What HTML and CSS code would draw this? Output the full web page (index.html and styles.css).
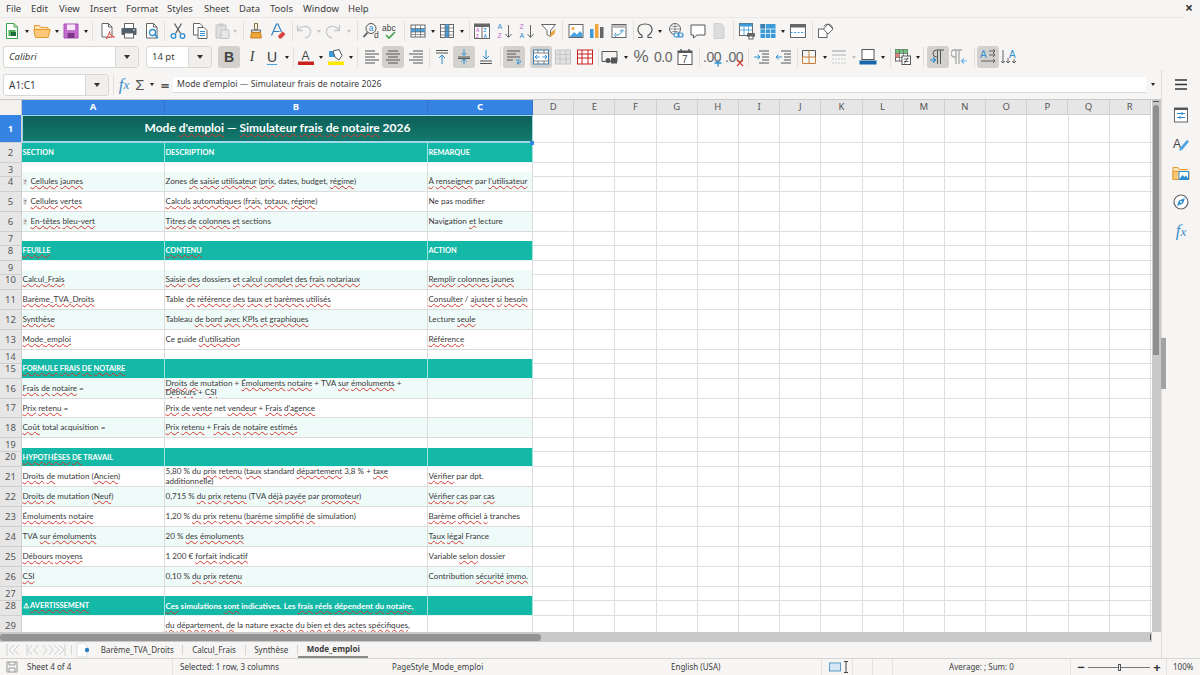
FILE: index.html
```html
<!DOCTYPE html>
<html lang="en">
<head>
    <meta charset="UTF-8">
    <title>Mode_emploi - LibreOffice Calc</title>
    <link rel="stylesheet" href="styles.css">
</head>
<body>
<div class="app">

    <div class="menubar">
        <span>File</span><span>Edit</span><span>View</span><span>Insert</span><span>Format</span><span>Styles</span><span>Sheet</span><span>Data</span><span>Tools</span><span>Window</span><span>Help</span>
        <span class="close">&#215;</span>
    </div>

    <!-- standard toolbar -->
    <div class="tb tb1">
        <span class="btn"><svg class="ic" viewBox="0 0 18 18"><path d="M3.5 1.500h7.500l3.500 3.500v11.500h-11z" fill="#fff" stroke="#3fa34d"/><path d="M11 1.500V5h3.500" stroke="#3fa34d"/><rect x="5.500" y="8" width="7" height="6" fill="#4fae5c"/><path d="M8 10h5v4H8z" fill="#1f6e3a"/></svg></span>
        <span class="ar"></span>
        <span class="btn"><svg class="ic" viewBox="0 0 18 18"><path d="M1.500 7V3.500h5l1.500 2h7V7" fill="#fde3b0" stroke="#e59a34"/><path d="M.8 7.500h16.400l-2 8H2.300z" fill="#fcc877" stroke="#e59a34"/></svg></span>
        <span class="ar"></span>
        <span class="btn n-1"><svg class="ic" viewBox="0 0 18 18"><path d="M2 2h14v14H2z" fill="#c46fcf" stroke="#a84fb5"/><rect x="5" y="2.500" width="8" height="5.500" fill="#f6e9f8"/><rect x="5.500" y="11" width="7" height="5" fill="#7a3488"/></svg></span>
        <span class="ar"></span>
        <span class="sep"></span>
        <span class="btn n1"><svg class="ic" viewBox="0 0 18 18"><path d="M4 1.500h6.500l3.500 3.500v10H4z" fill="#fff" stroke="#666"/><path d="M10.500 1.500V5H14" stroke="#666"/><path d="M8 16.500c2-1 3-5 3.500-7 .5 3 2 5 5 5.500-2-.5-6 0-8.500 1.500z" fill="#fbe3e3" stroke="#d9453d"/></svg></span>
        <span class="btn"><svg class="ic" viewBox="0 0 18 18"><rect x="4.500" y="1.500" width="9" height="5" fill="#fff" stroke="#666"/><rect x="1.500" y="6" width="15" height="7" rx="1" fill="#4f5f6b"/><rect x="4.500" y="11" width="9" height="5" fill="#fff" stroke="#666"/><circle cx="14" cy="8" r=".8" fill="#fff"/></svg></span>
        <span class="btn n1"><svg class="ic" viewBox="0 0 18 18"><path d="M3.500 1.500h7l3.500 3.500v11H3.500z" fill="#fff" stroke="#666"/><path d="M10.500 1.500V5H14" stroke="#666"/><circle cx="9.500" cy="10.500" r="3" stroke="#2f8fd0" stroke-width="1.300"/><path d="M11.800 12.800l3.200 3.200" stroke="#2f8fd0" stroke-width="1.600"/></svg></span>
        <span class="sep n-1"></span>
        <span class="btn"><svg class="ic" viewBox="0 0 18 18"><path d="M5.500 1.500l6 10M12.500 1.500l-6 10" stroke="#555" stroke-width="1.200"/><circle cx="4.500" cy="14" r="2.300" stroke="#2f8fd0" stroke-width="1.300"/><circle cx="13.500" cy="14" r="2.300" stroke="#2f8fd0" stroke-width="1.300"/></svg></span>
        <span class="btn"><svg class="ic" viewBox="0 0 18 18"><path d="M2.500 1.500h6.500l2.500 2.500v9h-9z" fill="#fff" stroke="#666"/><path d="M7 5.500h6l3 3v8H7z" fill="#fff" stroke="#666"/><path d="M9 9.500h5M9 11.500h5M9 13.500h5" stroke="#2f8fd0"/></svg></span>
        <span class="btn"><svg class="ic" viewBox="0 0 18 18"><path d="M3 3h10v13H3z" fill="#dedede" stroke="#c4c4c4"/><rect x="5.500" y="1.500" width="5" height="3" fill="#ccc"/><path d="M8 8h8v8.500H8z" fill="#e8e8e8" stroke="#c4c4c4"/></svg></span>
        <span class="ar off n-2"></span>
        <span class="sep n2"></span>
        <span class="btn n-1"><svg class="ic" viewBox="0 0 18 18"><path d="M7.500 1.500h3v6h-3z" stroke="#8a6d3b"/><path d="M4.500 8h9v2.500h-9z" fill="#ddd" stroke="#666"/><path d="M4.500 10.500h9l.8 5.500H3.700z" fill="#f0a63c" stroke="#c97e1e"/></svg></span>
        <span class="btn"><svg class="ic" viewBox="0 0 18 18"><path d="M2.500 13.500L7.500 2h1.500l3.500 8M4.500 9.500h6" stroke="#2f7fc0" stroke-width="1.200"/><path d="M9 14l4.500-4.500 3 2.500-4 4.500H10z" fill="#d9453d"/></svg></span>
        <span class="sep n1"></span>
        <span class="btn n-2"><svg class="ic" viewBox="0 0 18 18"><path d="M2.500 3v5.500H8" stroke="#c8c8c8" stroke-width="1.300"/><path d="M3 8.500c2-5 11-6 12.500 0 1 4.500-2.500 7-5.500 7.500" stroke="#c8c8c8" stroke-width="1.300"/></svg></span>
        <span class="ar off"></span>
        <span class="btn n-1"><svg class="ic" viewBox="0 0 18 18"><path d="M15.500 3v5.500H10" stroke="#c8c8c8" stroke-width="1.300"/><path d="M15 8.500c-2-5-11-6-12.500 0-1 4.500 2.500 7 5.500 7.500" stroke="#c8c8c8" stroke-width="1.300"/></svg></span>
        <span class="ar off n1"></span>
        <span class="sep n2"></span>
        <span class="btn"><svg class="ic" viewBox="0 0 18 18"><circle cx="9" cy="6.500" r="5" stroke="#555"/><path d="M5.500 10.500L1.500 15" stroke="#555" stroke-width="1.800"/><text x="6.700" y="9" class="glyph blue">a</text><text x="12" y="16" class="glyph">d</text></svg></span>
        <span class="btn n-3"><svg class="ic" viewBox="0 0 18 18"><text x="1" y="8.500" class="glyph">abc</text><path d="M5 13l3 3 6-6" stroke="#3fa34d" stroke-width="1.600"/></svg></span>
        <span class="sep n1"></span>
        <span class="btn"><svg class="ic" viewBox="0 0 18 18"><rect x="2" y="3" width="14" height="12" fill="#fff" stroke="#666"/><rect x="2" y="6.500" width="14" height="3.500" fill="#4aa3df"/><path d="M2 6.500h14M2 10h14M2 12.500h14M6.500 3v12M11.500 3v12" stroke="#666" stroke-width=".7"/></svg></span>
        <span class="ar"></span>
        <span class="btn n-1"><svg class="ic" viewBox="0 0 18 18"><rect x="2.500" y="2.500" width="13" height="13" fill="#fff" stroke="#666"/><rect x="7" y="2.500" width="4" height="13" fill="#4aa3df"/><path d="M7 2.500v13M11 2.500v13M2.500 6h13M2.500 9.500h13M2.500 13h13" stroke="#666" stroke-width=".7"/></svg></span>
        <span class="ar"></span>
        <span class="sep n1"></span>
        <span class="btn n-1"><svg class="ic" viewBox="0 0 18 18"><rect x="1.500" y="2" width="15" height="14.500" fill="#fff" stroke="#666"/><rect x="1.500" y="2" width="15" height="3" fill="#666"/><path d="M9 5v11.500" stroke="#666"/><text x="3" y="10" class="glyph-s pink">A</text><text x="3" y="15.500" class="glyph-s pink">Z</text><text x="10.500" y="10" class="glyph-s blue">Z</text><text x="10.500" y="15.500" class="glyph-s blue">A</text></svg></span>
        <span class="btn n1"><svg class="ic" viewBox="0 0 18 18"><text x="1.500" y="7" class="glyph-t blue">A</text><text x="1.500" y="15.500" class="glyph-t pink">Z</text><path d="M12.500 3v12M9.500 12l3 3.500 3-3.500" stroke="#666"/></svg></span>
        <span class="btn"><svg class="ic" viewBox="0 0 18 18"><text x="1.500" y="7" class="glyph-t pink">Z</text><text x="1.500" y="15.500" class="glyph-t blue">A</text><path d="M12.500 3v12M9.500 12l3 3.500 3-3.500" stroke="#666"/></svg></span>
        <span class="btn"><svg class="ic" viewBox="0 0 18 18"><path d="M1.500 2.500h14l-5 6v6l-3.500-2v-4z" fill="#fff" stroke="#666"/><path d="M9.500 15.500l2-5.500 4-3-1 5z" fill="#f0a63c"/></svg></span>
        <span class="sep"></span>
        <span class="btn"><svg class="ic" viewBox="0 0 18 18"><rect x="2" y="2.500" width="14" height="13" fill="#fff" stroke="#666"/><circle cx="6" cy="6.500" r="1.500" fill="#f0a63c"/><path d="M2.500 15l4.500-5 3 2.500 3-3.500 2.500 3v3z" fill="#4aa3df"/></svg></span>
        <span class="btn n-1"><svg class="ic" viewBox="0 0 18 18"><rect x="2" y="7" width="3.500" height="9" fill="#3d9bd9"/><rect x="7" y="2" width="3.500" height="14" fill="#f0a63c"/><rect x="12" y="5" width="3.500" height="11" fill="#666"/></svg></span>
        <span class="btn"><svg class="ic" viewBox="0 0 18 18"><rect x="2" y="2.500" width="14" height="13" fill="#fff" stroke="#666"/><rect x="2.500" y="3" width="13" height="3" fill="#bbb"/><path d="M6 13c4 0 6-2 6-5M10 9.500L12 7.500l2 2M6 11l-1.500 2L6 15" stroke="#2f8fd0"/></svg></span>
        <span class="sep n1"></span>
        <span class="btn n-2"><svg class="ic" viewBox="0 0 18 18"><path d="M2 15.500h4v-2C3.500 12 2 10 2 7.500 2 4 5 2 9 2s7 2 7 5.500c0 2.500-1.500 4.500-4 6v2h4" stroke="#555" stroke-width="1.200"/></svg></span>
        <span class="ar"></span>
        <span class="btn n1"><svg class="ic" viewBox="0 0 18 18"><circle cx="8" cy="7" r="5.500" fill="#fff" stroke="#666"/><path d="M2.500 7h11M8 1.500v11M4 3.500c2 1.500 6 1.500 8 0M4 10.500c2-1.500 6-1.500 8 0" stroke="#666" stroke-width=".7"/><rect x="7" y="11" width="5" height="4" rx="2" fill="#fff" stroke="#2f8fd0" stroke-width="1.200"/><rect x="11" y="11" width="5" height="4" rx="2" stroke="#2f8fd0" stroke-width="1.200"/></svg></span>
        <span class="btn"><svg class="ic" viewBox="0 0 18 18"><path d="M2 3h14v10H8l-3.500 3v-3H2z" fill="#fff" stroke="#555"/></svg></span>
        <span class="btn n-1"><svg class="ic" viewBox="0 0 18 18"><path d="M4 1.500h7l3 3v12H4z" fill="#dcdcdc" stroke="#d0d0d0"/></svg></span>
        <span class="sep n1"></span>
        <span class="btn"><svg class="ic" viewBox="0 0 18 18"><rect x="1.500" y="1.500" width="13" height="12" fill="#fff" stroke="#666"/><rect x="1.500" y="1.500" width="13" height="3" fill="#3d9bd9"/><path d="M1.500 8h13M6 4.500v9M10.500 4.500v9" stroke="#3d9bd9" stroke-width=".8"/><rect x="9" y="11" width="8" height="4" rx="1" fill="#666"/><rect x="11" y="14" width="4" height="3" fill="#fff" stroke="#666"/></svg></span>
        <span class="btn n-1"><svg class="ic" viewBox="0 0 18 18"><rect x="1.500" y="2" width="15" height="14" fill="#3d9bd9"/><rect x="1.500" y="2" width="5" height="5" fill="#3d7eb0"/><path d="M6.500 2v14M1.500 7h15M11.500 7v9M1.500 11.500h15" stroke="#fff" stroke-width=".7"/></svg></span>
        <span class="ar"></span>
        <span class="btn"><svg class="ic" viewBox="0 0 18 18"><rect x="1.500" y="2.500" width="15" height="13" fill="#fff" stroke="#666"/><rect x="1.500" y="2.500" width="15" height="3" fill="#666"/><path d="M1.500 10.500h15" stroke="#3d9bd9" stroke-dasharray="2 1.500"/></svg></span>
        <span class="sep n1"></span>
        <span class="btn"><svg class="ic" viewBox="0 0 18 18"><rect x="1.500" y="7" width="8.500" height="8.500" fill="#fff" stroke="#666"/><path d="M11 2l5 5-5 5-4.500-5z" fill="#fff" stroke="#666"/><path d="M6.800 4.300a4.800 4.800 0 0 1 8.800 2" stroke="#666"/></svg></span>
    </div>

    <!-- formatting toolbar -->
    <div class="tb tb2">
        <span class="combo font-box"><span class="combo-val italic">Calibri</span><span class="combo-btn"></span></span>
        <span class="combo size-box"><span class="combo-val">14 pt</span><span class="combo-btn"></span></span>
        <span class="btn on bold-btn">B</span>
        <span class="btn fmt italic-btn n1">I</span>
        <span class="btn fmt under-btn n-2">U</span>
        <span class="ar"></span>
        <span class="sep"></span>
        <span class="btn n-1"><svg class="ic" viewBox="0 0 18 18"><text x="4.500" y="12" class="glyph-l">A</text><rect x="1" y="13.500" width="16" height="3.500" fill="#c9211e"/></svg></span>
        <span class="ar"></span>
        <span class="btn"><svg class="ic" viewBox="0 0 18 18"><rect x="2" y="3" width="7" height="6" fill="#3d9bd9"/><path d="M6 3l6-1.500 3 6-3 4.500-4-3z" fill="#fff" stroke="#555"/><rect x="1" y="13.500" width="16" height="3.500" fill="#ffe800"/></svg></span>
        <span class="ar"></span>
        <span class="sep"></span>
        <span class="btn n1"><svg class="ic" viewBox="0 0 18 18"><path d="M2 3h10M2 6h14M2 9h10M2 12h14M2 15h10" stroke="#555"/></svg></span>
        <span class="btn on n-1"><svg class="ic" viewBox="0 0 18 18"><path d="M4 3h10M2 6h14M4 9h10M2 12h14M4 15h10" stroke="#555"/></svg></span>
        <span class="btn n1"><svg class="ic" viewBox="0 0 18 18"><path d="M6 3h10M2 6h14M6 9h10M2 12h14M6 15h10" stroke="#555"/></svg></span>
        <span class="sep"></span>
        <span class="btn n-1"><svg class="ic" viewBox="0 0 18 18"><path d="M3 2.500h12M3 5h12" stroke="#555"/><path d="M9 16V7.500M6 10l3-3 3 3" stroke="#2f8fd0"/></svg></span>
        <span class="btn on"><svg class="ic" viewBox="0 0 18 18"><path d="M3 9h12M3 10.500h12" stroke="#555"/><path d="M9 1.500V7M6.500 5L9 7.500 11.500 5M9 16.500V11.500M6.500 13.500L9 11l2.500 2.500" stroke="#2f8fd0"/></svg></span>
        <span class="btn"><svg class="ic" viewBox="0 0 18 18"><path d="M3 13h12M3 15.500h12" stroke="#555"/><path d="M9 2v8.500M6 8l3 3 3-3" stroke="#2f8fd0"/></svg></span>
        <span class="sep n1"></span>
        <span class="btn on"><svg class="ic" viewBox="0 0 18 18"><path d="M2 3h13M2 6h9M2 9h13M2 12h6" stroke="#555"/><path d="M11 12h3c2 0 2 3 0 3h-2M14 13.500l-2 1.500 2 1.500" stroke="#2f8fd0"/></svg></span>
        <span class="btn on n5"><svg class="ic" viewBox="0 0 18 18"><rect x="1.500" y="2" width="15" height="14" fill="#fff" stroke="#3d7eb0"/><path d="M1.500 5h15M1.500 13h15M6 2v3M12 2v3M6 13v3M12 13v3" stroke="#555" stroke-width=".7"/><path d="M3 9h4.500M5 7L3 9l2 2M15 9h-4.500M13 7l2 2-2 2" stroke="#2f8fd0"/></svg></span>
        <span class="btn"><svg class="ic" viewBox="0 0 18 18"><rect x="1.500" y="2" width="15" height="14" fill="#e2e2e2" stroke="#c4c4c4"/><path d="M1.500 6.500h15M1.500 11h15M6 2v14M12 2v14" stroke="#c4c4c4"/></svg></span>
        <span class="btn"><svg class="ic" viewBox="0 0 18 18"><rect x="1.500" y="2" width="15" height="14" fill="#fff" stroke="#c9211e"/><path d="M1.500 6h15M1.500 10h15M6 2v14M12 2v14" stroke="#c9211e"/></svg></span>
        <span class="sep"></span>
        <span class="btn n-2"><svg class="ic" viewBox="0 0 18 18"><path d="M1 3.500h15v10H1z" stroke="#555"/><circle cx="7" cy="12.500" r="2.500" fill="#555"/><rect x="10" y="9.500" width="6" height="6" fill="#555"/></svg></span>
        <span class="ar n1"></span>
        <span class="btn fmt pct">%</span>
        <span class="btn fmt num">0.0</span>
        <span class="btn"><svg class="ic" viewBox="0 0 18 18"><rect x="2" y="3" width="14" height="13.500" fill="#fff" stroke="#555"/><rect x="2" y="3" width="14" height="2" fill="#555"/><path d="M5 1v3M13 1v3" stroke="#555" stroke-width="1.400"/><text x="6" y="14.500" class="glyph-m">7</text></svg></span>
        <span class="sep n1"></span>
        <span class="btn n-1"><span class="dec">.00</span><svg class="dec-mark" viewBox="0 0 8 8"><path d="M4 .5v7M.5 4h7" stroke="#2f8fd0" stroke-width="1.300"/></svg></span>
        <span class="btn"><span class="dec">.00</span><svg class="dec-mark" viewBox="0 0 8 8"><path d="M1 1l6 6M7 1L1 7" stroke="#d9453d" stroke-width="1.300"/></svg></span>
        <span class="sep n1"></span>
        <span class="btn"><svg class="ic" viewBox="0 0 18 18"><path d="M6 3h10M9 6h7M9 9h7M9 12h7M6 15h10" stroke="#555"/><path d="M1 9h6M4.500 6.500L7 9l-2.500 2.500" stroke="#2f8fd0"/></svg></span>
        <span class="btn"><svg class="ic" viewBox="0 0 18 18"><path d="M6 3h10M9 6h7M9 9h7M9 12h7M6 15h10" stroke="#555"/><path d="M7 9H1M3.500 6.500L1 9l2.500 2.500" stroke="#2f8fd0"/></svg></span>
        <span class="sep"></span>
        <span class="btn n-2"><svg class="ic" viewBox="0 0 18 18"><path d="M2.500 9V2.500H9M9 2.500h6.500V9" stroke="#555"/><path d="M2.500 9v6.500H9h6.500V9M2.500 9h13M9 2.500v13" stroke="#c97e3a"/></svg></span>
        <span class="ar n1"></span>
        <span class="btn n-1"><svg class="ic" viewBox="0 0 18 18"><path d="M2 3h14" stroke="#c8c8c8" stroke-width="2"/><path d="M2 7h14" stroke="#c8c8c8" stroke-width="1.500"/><path d="M2 11h14M2 15h14" stroke="#c8c8c8" stroke-dasharray="2 1"/></svg></span>
        <span class="ar off"></span>
        <span class="btn n-1"><svg class="ic" viewBox="0 0 18 18"><rect x="3" y="1.500" width="12" height="10" fill="#fff" stroke="#555"/><rect x=".5" y="12.500" width="17" height="4" fill="#1b64a8"/></svg></span>
        <span class="ar"></span>
        <span class="sep n1"></span>
        <span class="btn n-1"><svg class="ic" viewBox="0 0 18 18"><rect x="1.500" y="1.500" width="12" height="11.500" fill="#fff" stroke="#666"/><rect x="1.500" y="1.500" width="12" height="4" fill="#73c17a"/><rect x="1.500" y="5.500" width="4" height="4" fill="#e88080"/><path d="M1.500 5.500h12M1.500 9.500h12M5.500 1.500v11.500M9.500 1.500v11.500" stroke="#666" stroke-width=".7"/><rect x="8" y="8" width="8.500" height="8.500" fill="#fff" stroke="#555"/><path d="M10 11h4.500M10 13.500h4.500M14 9.500l-3.500 6" stroke="#555" stroke-width=".9"/></svg></span>
        <span class="ar"></span>
        <span class="sep n-1"></span>
        <span class="btn on n1"><svg class="ic" viewBox="0 0 18 18"><path d="M8.500 2v14M11.500 2v14M15 2H7.500a3.500 3.500 0 0 0 0 7h1" stroke="#555"/><path d="M1 12h5M4 9.500L6.500 12 4 14.500" stroke="#2f8fd0" stroke-width="1.200"/></svg></span>
        <span class="btn"><svg class="ic" viewBox="0 0 18 18"><path d="M5 2v14M8 2v14M11 2H3.500a3.500 3.500 0 0 0 0 7h1.500" stroke="#a8a8a8" stroke-width="1.300"/><path d="M16 13h-5M13 10.500L10.500 13l2.500 2.500" stroke="#73b4e0" stroke-width="1.200"/></svg></span>
        <span class="sep n1"></span>
        <span class="btn on"><svg class="ic" viewBox="0 0 18 18"><text x="1" y="9.500" class="glyph-m blue">A</text><path d="M10 3h6M14 1l2 2-2 2M10 7h6M14 5l2 2-2 2M2 13h14M14 11l2 2-2 2" stroke="#555" stroke-width=".9"/></svg></span>
        <span class="btn"><svg class="ic" viewBox="0 0 18 18"><text x="8" y="9.500" class="glyph-m blue">A</text><path d="M2 2v13M0 13l2 2 2-2M7 10v5M5 13l2 2 2-2M13 11v4M11 13l2 2 2-2" stroke="#555" stroke-width=".9"/></svg></span>
    </div>

    <div class="work">
        <div class="left">

            <div class="formula">
                <span class="combo name-box"><span class="combo-val">A1:C1</span><span class="combo-btn"></span></span>
                <span class="sep"></span>
                <span class="btn fx-btn"><i>f</i><i class="x">x</i></span>
                <span class="sigma">&#931;</span>
                <span class="ar"></span>
                <span class="equals">=</span>
                <span class="fbar">Mode d'emploi — Simulateur frais de notaire 2026</span>
                <span class="ar"></span>
            </div>

            <div class="sheetwrap">
                <div class="sheet">
                    <div class="colhead">
                        <span class="corner"></span>
                        <span class="ch sel">A</span><span class="ch sel">B</span><span class="ch sel">C</span>
                        <span class="ch">D</span><span class="ch">E</span><span class="ch">F</span><span class="ch">G</span><span class="ch">H</span><span class="ch">I</span><span class="ch">J</span><span class="ch">K</span><span class="ch">L</span><span class="ch">M</span><span class="ch">N</span><span class="ch">O</span><span class="ch">P</span><span class="ch">Q</span><span class="ch">R</span>
                    </div>

                    <div class="row title"><span class="rh sel">1</span><span class="c-title">Mode <u>d'emploi</u> — <u>Simulateur</u> <u>frais</u> <u>de</u> <u>notaire</u> 2026</span><span class="rest"></span><span class="handle"></span></div>

                    <div class="row hd"><span class="rh">2</span><span class="c">SECTION</span><span class="c">DESCRIPTION</span><span class="c">REMARQUE</span><span class="rest"></span></div>
                    <div class="row sm"><span class="rh">3</span><span class="c"></span><span class="c"></span><span class="c"></span><span class="rest"></span></div>
                    <div class="row tint"><span class="rh">4</span><span class="c"><b class="q">?</b> <u>Cellules</u> <u>jaunes</u></span><span class="c">Zones <u>de</u> <u>saisie</u> <u>utilisateur</u> (<u>prix</u>, dates, budget, <u>régime</u>)</span><span class="c"><u>À</u> <u>renseigner</u> par <u>l'utilisateur</u></span><span class="rest"></span></div>
                    <div class="row"><span class="rh">5</span><span class="c"><b class="q">?</b> <u>Cellules</u> <u>vertes</u></span><span class="c"><u>Calculs</u> <u>automatiques</u> (<u>frais</u>, <u>totaux</u>, <u>régime</u>)</span><span class="c">Ne pas modifier</span><span class="rest"></span></div>
                    <div class="row tint"><span class="rh">6</span><span class="c"><b class="q">?</b> <u>En-têtes</u> <u>bleu-vert</u></span><span class="c"><u>Titres</u> <u>de</u> <u>colonnes</u> <u>et</u> sections</span><span class="c">Navigation <u>et</u> lecture</span><span class="rest"></span></div>
                    <div class="row sm"><span class="rh">7</span><span class="c"></span><span class="c"></span><span class="c"></span><span class="rest"></span></div>
                    <div class="row hd"><span class="rh">8</span><span class="c"><u>FEUILLE</u></span><span class="c"><u>CONTENU</u></span><span class="c">ACTION</span><span class="rest"></span></div>
                    <div class="row sm"><span class="rh">9</span><span class="c"></span><span class="c"></span><span class="c"></span><span class="rest"></span></div>
                    <div class="row tint"><span class="rh">10</span><span class="c"><u>Calcul_Frais</u></span><span class="c"><u>Saisie</u> <u>des</u> dossiers <u>et</u> <u>calcul</u> <u>complet</u> <u>des</u> <u>frais</u> <u>notariaux</u></span><span class="c"><u>Remplir</u> <u>colonnes</u> <u>jaunes</u></span><span class="rest"></span></div>
                    <div class="row"><span class="rh">11</span><span class="c"><u>Barème_TVA_Droits</u></span><span class="c">Table <u>de</u> <u>référence</u> <u>des</u> <u>taux</u> <u>et</u> <u>barèmes</u> <u>utilisés</u></span><span class="c"><u>Consulter</u> / <u>ajuster</u> <u>si</u> <u>besoin</u></span><span class="rest"></span></div>
                    <div class="row tint"><span class="rh">12</span><span class="c"><u>Synthèse</u></span><span class="c">Tableau <u>de</u> <u>bord</u> <u>avec</u> <u>KPIs</u> <u>et</u> <u>graphiques</u></span><span class="c">Lecture <u>seule</u></span><span class="rest"></span></div>
                    <div class="row"><span class="rh">13</span><span class="c"><u>Mode_emploi</u></span><span class="c">Ce guide <u>d'utilisation</u></span><span class="c"><u>Référence</u></span><span class="rest"></span></div>
                    <div class="row sm"><span class="rh">14</span><span class="c"></span><span class="c"></span><span class="c"></span><span class="rest"></span></div>
                    <div class="row hd"><span class="rh">15</span><span class="c"><u>FORMULE</u> <u>FRAIS</u> <u>DE</u> <u>NOTAIRE</u></span><span class="c"></span><span class="c"></span><span class="rest"></span></div>
                    <div class="row tint"><span class="rh">16</span><span class="c"><u>Frais</u> <u>de</u> <u>notaire</u> =</span><span class="c wrap"><u>Droits</u> <u>de</u> mutation + <u>Émoluments</u> <u>notaire</u> + TVA <u>sur</u> <u>émoluments</u> + <u>Débours</u> + <u>CSI</u></span><span class="c"></span><span class="rest"></span></div>
                    <div class="row"><span class="rh">17</span><span class="c"><u>Prix</u> <u>retenu</u> =</span><span class="c"><u>Prix</u> <u>de</u> <u>vente</u> net <u>vendeur</u> + <u>Frais</u> <u>d'agence</u></span><span class="c"></span><span class="rest"></span></div>
                    <div class="row tint"><span class="rh">18</span><span class="c"><u>Coût</u> total acquisition =</span><span class="c"><u>Prix</u> <u>retenu</u> + <u>Frais</u> <u>de</u> <u>notaire</u> <u>estimés</u></span><span class="c"></span><span class="rest"></span></div>
                    <div class="row sm"><span class="rh">19</span><span class="c"></span><span class="c"></span><span class="c"></span><span class="rest"></span></div>
                    <div class="row hd"><span class="rh">20</span><span class="c"><u>HYPOTHÈSES</u> <u>DE</u> TRAVAIL</span><span class="c"></span><span class="c"></span><span class="rest"></span></div>
                    <div class="row"><span class="rh">21</span><span class="c"><u>Droits</u> <u>de</u> mutation (<u>Ancien</u>)</span><span class="c wrap">5,80 % du <u>prix</u> <u>retenu</u> (<u>taux</u> standard <u>département</u> 3,8 % + <u>taxe</u> <u>additionnelle</u>)</span><span class="c"><u>Vérifier</u> par dpt.</span><span class="rest"></span></div>
                    <div class="row tint"><span class="rh">22</span><span class="c"><u>Droits</u> <u>de</u> mutation (<u>Neuf</u>)</span><span class="c">0,715 % <u>du</u> <u>prix</u> <u>retenu</u> (TVA <u>déjà</u> <u>payée</u> par <u>promoteur</u>)</span><span class="c"><u>Vérifier</u> <u>cas</u> par <u>cas</u></span><span class="rest"></span></div>
                    <div class="row"><span class="rh">23</span><span class="c"><u>Émoluments</u> <u>notaire</u></span><span class="c">1,20 % <u>du</u> <u>prix</u> <u>retenu</u> (<u>barème</u> <u>simplifié</u> <u>de</u> simulation)</span><span class="c"><u>Barème</u> <u>officiel</u> <u>à</u> tranches</span><span class="rest"></span></div>
                    <div class="row tint"><span class="rh">24</span><span class="c">TVA <u>sur</u> <u>émoluments</u></span><span class="c">20 % <u>des</u> <u>émoluments</u></span><span class="c"><u>Taux</u> <u>légal</u> France</span><span class="rest"></span></div>
                    <div class="row"><span class="rh">25</span><span class="c"><u>Débours</u> <u>moyens</u></span><span class="c">1 200 € <u>forfait</u> <u>indicatif</u></span><span class="c">Variable <u>selon</u> dossier</span><span class="rest"></span></div>
                    <div class="row tint"><span class="rh">26</span><span class="c"><u>CSI</u></span><span class="c">0,10 % <u>du</u> <u>prix</u> <u>retenu</u></span><span class="c">Contribution <u>sécurité</u> <u>immo.</u></span><span class="rest"></span></div>
                    <div class="row sm"><span class="rh">27</span><span class="c"></span><span class="c"></span><span class="c"></span><span class="rest"></span></div>
                    <div class="row hd"><span class="rh">28</span><span class="c">&#9888; <u>AVERTISSEMENT</u></span><span class="c warn"><u>Ces</u> simulations <u>sont</u> indicatives. Les <u>frais</u> <u>réels</u> <u>dépendent</u> <u>du</u> <u>notaire</u>,</span><span class="c"></span><span class="rest"></span></div>
                    <div class="row"><span class="rh">29</span><span class="c"></span><span class="c"><u>du</u> <u>département</u>, <u>de</u> la nature <u>exacte</u> <u>du</u> <u>bien</u> <u>et</u> <u>des</u> <u>actes</u> <u>spécifiques</u>,</span><span class="c"></span><span class="rest"></span></div>
                </div>
                <div class="vscroll"><span class="vgrip"></span><span class="vthumb"></span></div>
            </div>

            <div class="hscroll"><span class="hthumb"></span><span class="hgrip"></span></div>

            <div class="tabs">
                <svg class="tabnav" viewBox="0 0 62 14"><path d="M2 1v12M9 2L4 7l5 5M14 2L9 7l5 5M22 1v12M27 2l-4 5 4 5M33 2l-4 5 4 5M38 2l4 5-4 5M44 2l4 5-4 5M49 2l5 5-5 5M54 2l5 5-5 5M60 1v12" stroke="#cfcfcf" fill="none"/></svg>
                <span class="tabsep first"></span>
                <svg class="newtab" viewBox="0 0 14 16"><path d="M1 1h7l3 3v11H1z" fill="#fff" stroke="#ddd"/><circle cx="11" cy="8" r="2.200" fill="#2f7fc0"/></svg>
                <span class="tab t1">Barème_TVA_Droits</span><span class="tabsep"></span>
                <span class="tab">Calcul_Frais</span><span class="tabsep"></span>
                <span class="tab">Synthèse</span><span class="tabsep"></span>
                <span class="tab active">Mode_emploi</span>
            </div>
        </div>

        <div class="side">
            <span class="collapse"></span>
            <svg class="sb first-sb" viewBox="0 0 18 18"><path d="M3 4h12M3 8.500h12M3 13h12" stroke="#333" stroke-width="1.500"/></svg>
            <svg class="sb" viewBox="0 0 18 18"><rect x="2.500" y="2" width="13" height="14" fill="#fff" stroke="#666"/><rect x="2.500" y="2" width="13" height="2" fill="#555"/><path d="M5 7.500h8M5 11.500h8" stroke="#2f8fd0"/><path d="M10 6v3M8 10v3" stroke="#2f8fd0"/></svg>
            <svg class="sb" viewBox="0 0 18 18"><text x="1" y="13" class="glyph-l">A</text><path d="M7 16l1-3 7-8 2 1.500-6.500 8z" fill="#4aa3df"/></svg>
            <svg class="sb" viewBox="0 0 18 18"><path d="M1 15V3.500h5l1.500 2H16" stroke="#e59a34" fill="#fde3b0"/><path d="M1 7.500h16v8H1z" fill="#fcc877" stroke="#e59a34"/><rect x="7" y="7.500" width="9.500" height="8" fill="#fff" stroke="#2f8fd0"/><path d="M7.500 15l3-4 2 2 1.500-1.500 2.500 3.500z" fill="#2f8fd0"/></svg>
            <svg class="sb" viewBox="0 0 18 18"><circle cx="9" cy="9" r="7" fill="#fff" stroke="#666" stroke-width="1.200"/><path d="M13 5l-6 2.500L5 13l6-2.500z" fill="#2f8fd0"/><circle cx="9" cy="9" r="1" fill="#fff"/></svg>
            <span class="sb-fx"><i>f</i><i class="x">x</i></span>
        </div>
    </div>

    <div class="status">
        <span class="st st-sheet"><svg class="st-save" viewBox="0 0 12 12"><path d="M1 1h10v10H1z" fill="none" stroke="#999"/><path d="M3 1v3h6V1M3 11V7h6v4" fill="none" stroke="#999"/></svg>Sheet 4 of 4</span>
        <span class="st st-sel">Selected: 1 row, 3 columns</span>
        <span class="st st-page">PageStyle_Mode_emploi</span>
        <span class="st st-lang">English (USA)</span>
        <span class="st st-mode"><svg class="st-ic" viewBox="0 0 20 12"><rect x=".5" y="2" width="11" height="8" fill="#d6e8f5" stroke="#5a9bc8"/><path d="M15 .5h4M17 .5v11M15 11.500h4" fill="none" stroke="#444"/></svg></span>
        <span class="st st-a"></span>
        <span class="st st-b"></span>
        <span class="st st-avg">Average: ; Sum: 0</span>
        <span class="st st-zoom"><span class="z-sign">&#8722;</span><span class="z-line"><span class="z-thumb"></span></span><span class="z-sign">+</span></span>
        <span class="st st-pct">100%</span>
    </div>
</div>
</body>
</html>
```

FILE: styles.css
```css
* {
    box-sizing: border-box;
}

html, body {
    margin: 0;
    height: 100%;
    overflow: hidden;
}

body {
    font-family: "Noto Sans", sans-serif;
    font-size: 9.5px;
    color: #3d3d3d;
    background: #f6f5f4;
}

.app {
    width: 1200px;
    height: 675px;
    display: flex;
    flex-direction: column;
}

/* menu */
.menubar {
    height: 18px;
    display: grid;
    grid-template-columns: 25px 28px 31px 36px 41px 37px 35px 31px 33px 45px 30px;
    padding-left: 6px;
    line-height: 17px;
    border-bottom: 1px solid #e9e8e6;
    margin-right: 16px;
    position: relative;
    flex: none;
}

.close {
    position: absolute;
    right: -9px;
    top: 1px;
    font-size: 14px;
    line-height: 14px;
    font-weight: bold;
    color: #333;
}

/* toolbars */
.tb {
    display: flex;
    align-items: center;
    flex: none;
}

.tb1 {
    height: 26px;
    padding-left: 1px;
}

.tb2 {
    height: 26px;
    padding-left: 3px;
}

.btn {
    width: 22px;
    height: 22px;
    flex: none;
    display: flex;
    align-items: center;
    justify-content: center;
    border-radius: 3px;
    position: relative;
}

.btn.on {
    background: #d3d1ce;
}

.ic {
    width: 18px;
    height: 18px;
    fill: none;
    display: block;
}

.ar {
    width: 8px;
    flex: none;
    display: flex;
    justify-content: center;
}

.ar::before {
    content: "";
    border-left: 2.5px solid transparent;
    border-right: 2.5px solid transparent;
    border-top: 3px solid #222;
}

.ar.off::before {
    border-top-color: #c4c4c4;
}

.sep {
    width: 1px;
    height: 20px;
    margin: 0 2px;
    background: #e2e0dd;
    flex: none;
}

/* small nudges, the real toolbar is not evenly spaced */
.n-3 { margin-left: -3px; }
.n-2 { margin-left: -2px; }
.n-1 { margin-left: -1px; }
.n1 { margin-left: 1px; }
.n2 { margin-left: 2px; }
.n5 { margin-left: 5px; }
.sep.n-1 { margin-left: 1px; }
.sep.n1 { margin-left: 3px; }
.sep.n2 { margin-left: 4px; }

.glyph, .glyph-s, .glyph-t, .glyph-m, .glyph-l {
    font-family: "Liberation Sans", sans-serif;
    fill: #444;
    stroke: none;
}

.glyph { font-size: 8.5px; }
.glyph-s { font-size: 4.8px; font-weight: bold; }
.glyph-t { font-size: 7px; }
.glyph-m { font-size: 10px; }
.glyph-l { font-size: 12px; }

.blue { fill: #2f8fd0; }
.pink { fill: #c46fcf; }

.combo {
    height: 22px;
    display: flex;
    background: #fff;
    border: 1px solid #dad8d5;
    border-radius: 3px;
    flex: none;
    overflow: hidden;
}

.combo-val {
    flex: 1;
    padding-left: 5px;
    line-height: 20px;
}

.name-box .combo-val {
    font-size: 10px;
}

.italic {
    font-style: italic;
}

.combo-btn {
    width: 23px;
    background: #f0efed;
    border-left: 1px solid #dad8d5;
    display: flex;
    align-items: center;
    justify-content: center;
}

.combo-btn::before {
    content: "";
    border-left: 3.5px solid transparent;
    border-right: 3.5px solid transparent;
    border-top: 4px solid #333;
}

.font-box {
    width: 136px;
}

.size-box {
    width: 66px;
    margin: 0 6px 0 7px;
}

.fmt, .bold-btn {
    font-family: "Liberation Sans", sans-serif;
    font-size: 14px;
}

.bold-btn {
    font-weight: bold;
    color: #444;
}

.italic-btn {
    font-family: "Liberation Serif", serif;
    font-style: italic;
}

.under-btn {
    text-decoration: underline;
    text-decoration-color: #4aa3df;
    text-underline-offset: 2px;
}

.pct {
    font-size: 17px;
    color: #666;
}

.num {
    font-size: 14px;
    letter-spacing: -.5px;
    color: #666;
}

.dec {
    font-family: "Liberation Sans", sans-serif;
    font-size: 14px;
    letter-spacing: -.5px;
    color: #666;
}

.dec-mark {
    position: absolute;
    right: 1px;
    bottom: 1px;
    width: 8px;
    height: 8px;
}

/* main area */
.work {
    flex: 1;
    display: flex;
    min-height: 0;
}

.left {
    width: 1161px;
    flex: none;
    display: flex;
    flex-direction: column;
}

.side {
    flex: 1;
    border-left: 1px solid #dcdbd8;
    display: flex;
    flex-direction: column;
    align-items: center;
    padding-top: 6px;
    gap: 11px;
    position: relative;
}

.sb {
    width: 18px;
    height: 18px;
    flex: none;
}

.first-sb {
    margin-bottom: 1px;
}

.sb-fx, .fx-btn {
    font-family: "Liberation Serif", serif;
    color: #3d8ec9;
    font-size: 17px;
    line-height: 18px;
}

.sb-fx .x, .fx-btn .x {
    font-size: 13px;
}

.collapse {
    position: absolute;
    left: -1px;
    top: 268px;
    width: 5px;
    height: 51px;
    background: #a2a2a2;
}

/* formula bar */
.formula {
    height: 30px;
    display: flex;
    align-items: center;
    padding-left: 3px;
    flex: none;
    border-bottom: 1px solid #c9c9c9;
}

.name-box {
    width: 106px;
    margin-right: 2px;
}

.formula .sep {
    margin-right: 0;
}

.formula .fx-btn {
    width: 20px;
}

.sigma {
    width: 14px;
    margin-left: -1px;
    text-align: center;
    font-size: 15px;
    color: #555;
    font-family: "Liberation Sans", sans-serif;
}

.formula .ar {
    width: 10px;
}

.equals {
    width: 16px;
    text-align: center;
    font-size: 15px;
    line-height: 18px;
    font-weight: bold;
    color: #555;
}

.fbar {
    width: 973px;
    margin-right: 2px;
    height: 16px;
    background: #fff;
    border-bottom: 1px solid #dadada;
    padding-left: 4px;
    font-size: 8.7px;
    line-height: 15px;
    flex: none;
}

/* sheet */
.sheetwrap {
    flex: 1;
    display: flex;
    min-height: 0;
}

.sheet {
    width: 1152px;
    flex: none;
    overflow: hidden;
    background: #fff;
    position: relative;
    font-family: Lato, sans-serif;
    font-size: 8.1px;
    color: #3a3a3a;
}

.colhead {
    height: 15px;
    display: grid;
    grid-template-columns: 22px 143px 263px 105px repeat(15, 41.2px);
}

.corner {
    background: #f2f1f0;
    border-right: 1px solid #c9c9c9;
}

.ch {
    background: #e6e6e6;
    border-right: 1px solid #cfcfcf;
    border-bottom: 1px solid #cfcfcf;
    text-align: center;
    line-height: 14px;
    font-family: "Noto Sans", sans-serif;
    font-size: 9.5px;
    color: #555;
}

.ch.sel {
    background: #3584e4;
    border-color: #2f74c9;
    color: #fff;
    font-weight: bold;
}

.row {
    height: 19.9px;
    display: grid;
    grid-template-columns: 22px 143px 263px 105px 619px;
    align-items: stretch;
}

.row.sm {
    height: 9.2px;
}

.row.title {
    height: 28px;
    grid-template-columns: 22px 511px 619px;
    position: relative;
}

.rh {
    background: #e6e6e6;
    border-right: 1px solid #cfcfcf;
    border-bottom: 1px solid #cfcfcf;
    text-align: center;
    font-family: "Noto Sans", sans-serif;
    font-size: 9.5px;
    color: #555;
    display: flex;
    align-items: center;
    justify-content: center;
}

.sm .rh {
    position: relative;
    font-size: 9px;
}

.rh.sel {
    background: #3584e4;
    color: #fff;
    font-weight: bold;
}

.c {
    border-right: 1px solid #dcdcdc;
    border-bottom: 1px solid #dcdcdc;
    padding: 0 .5px;
    white-space: nowrap;
    overflow: hidden;
    line-height: 18.9px;
}

.c.wrap {
    white-space: normal;
    line-height: 9.6px;
}

.rest {
    border-bottom: 1px solid #dedede;
    background: repeating-linear-gradient(to right, transparent 0, transparent 40.2px, #dedede 40.2px, #dedede 41.2px);
}

u {
    text-decoration: underline wavy #d4362c;
    text-decoration-thickness: 1px;
    text-underline-offset: 1px;
    text-decoration-skip-ink: none;
}

.q {
    font-weight: normal;
    font-size: 6.5px;
    background: #e8e8e8;
    padding: 0 1px;
    margin-right: 1px;
}

.tint .c {
    background: #effbf9;
}

.hd .c {
    background: #14b8a6;
    color: #fff;
    font-weight: bold;
    font-size: 7.4px;
    line-height: 20.5px;
    border-right-color: #9fe3da;
    border-bottom-color: #e4f7f4;
}

.hd .c.warn {
    font-size: 8.1px;
}

.c-title {
    background: linear-gradient(#0d5f59, #137a6e);
    color: #fff;
    font-weight: bold;
    font-size: 12px;
    text-align: center;
    line-height: 23px;
    border: 1px solid #9fd8e8;
    border-width: 1px 1px 2px 1px;
}

.handle {
    position: absolute;
    left: 530px;
    top: 26px;
    width: 4px;
    height: 4px;
    background: #3584e4;
    z-index: 2;
}

/* scrollbars */
.vscroll {
    width: 9px;
    flex: none;
    background: #c9c9c9;
    padding-left: 1px;
    display: flex;
    flex-direction: column;
}

.vgrip {
    height: 1px;
    width: 6px;
    background: #555;
    margin-top: 1px;
}

.vthumb {
    width: 6px;
    height: 250px;
    background: #8e8e8e;
    margin-top: 3px;
    border-radius: 3px 3px 0 0;
}

.hscroll {
    height: 10px;
    flex: none;
    width: 1152px;
    background: #c9c9c9;
    display: flex;
    justify-content: space-between;
    align-items: center;
}

.hthumb {
    width: 541px;
    height: 7px;
    background: #949494;
    border-radius: 3px;
}

.hgrip {
    width: 1px;
    height: 6px;
    background: #555;
    margin-right: 1px;
}

/* sheet tabs */
.tabs {
    height: 16px;
    flex: none;
    display: flex;
    align-items: center;
    font-size: 8px;
}

.tabnav {
    width: 62px;
    height: 14px;
    margin-left: 5px;
}

.tabsep {
    width: 1px;
    height: 10px;
    background: #d5d4d1;
    flex: none;
}

.tabsep.first {
    margin-left: 4px;
}

.newtab {
    width: 14px;
    height: 16px;
    margin-left: 4px;
}

.tab {
    padding: 0 8.7px;
    line-height: 16px;
    white-space: nowrap;
}

.t1 {
    margin-left: 2px;
}

.tab.active {
    font-weight: bold;
    border-bottom: 2px solid #888;
    height: 16px;
    line-height: 14px;
}

/* status bar */
.status {
    height: 17px;
    flex: none;
    display: flex;
    align-items: center;
    border-top: 1px solid #d6d5d2;
    font-size: 8px;
}

.st {
    height: 16px;
    line-height: 16px;
    flex: none;
    white-space: nowrap;
    border-right: 1px solid #e4e3e0;
}

.st-sheet {
    width: 173px;
    display: flex;
    align-items: center;
    padding-left: 6px;
}

.st-save {
    width: 12px;
    height: 12px;
    margin-right: 9px;
}

.st-sel {
    width: 212px;
    padding-left: 7px;
    border-right: 0;
}

.st-page {
    width: 212px;
    padding-left: 7px;
    border-right: 0;
}

.st-lang {
    width: 225px;
    padding-left: 74px;
}

.st-mode {
    width: 31px;
    display: flex;
    align-items: center;
    padding-left: 7px;
}

.st-ic {
    width: 20px;
    height: 12px;
}

.st-a, .st-b {
    width: 20px;
}

.st-avg {
    width: 178px;
    text-align: center;
}

.st-zoom {
    width: 96px;
    display: flex;
    align-items: center;
    padding: 0 4px 0 5px;
}

.z-sign {
    width: 10px;
    text-align: center;
    font-size: 13px;
    font-weight: bold;
    color: #333;
}

.z-line {
    flex: 1;
    height: 1px;
    background: #777;
    position: relative;
    margin: 0 2px;
}

.z-thumb {
    position: absolute;
    left: 30px;
    top: -3px;
    width: 3px;
    height: 7px;
    background: #f6f5f4;
    border: 1px solid #555;
}

.st-pct {
    padding-left: 6px;
    border-right: 0;
}
```
